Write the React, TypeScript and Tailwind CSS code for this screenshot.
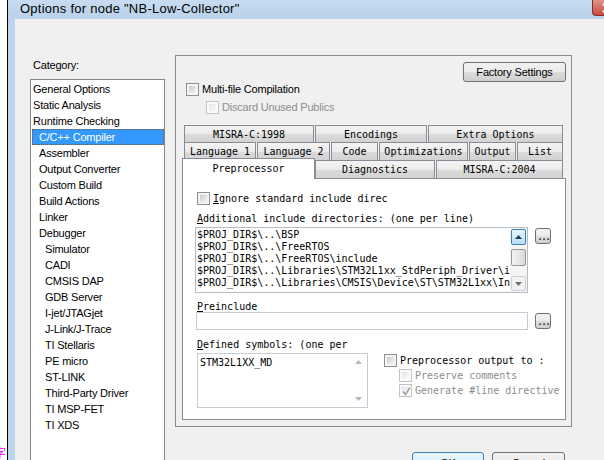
import React from "react";

const sans = "font-['Liberation_Sans',Arial,sans-serif] text-[11px] tracking-[-0.2px]";
const mono = "font-['DejaVu_Sans_Mono',monospace] text-[10px]";
const winBtn =
  "rounded-[3px] border border-[#707070] bg-[linear-gradient(#f2f2f2_0%,#ebebeb_50%,#dddddd_50%,#cfcfcf_100%)]";
const tabBg =
  "border border-b-0 border-[#898c95] bg-[linear-gradient(#f3f3f3_0%,#ebebeb_50%,#dcdcdc_50%,#d2d2d2_100%)]";

const categories: [string, number][] = [
  ["General Options", 0],
  ["Static Analysis", 0],
  ["Runtime Checking", 0],
  ["C/C++ Compiler", 1],
  ["Assembler", 1],
  ["Output Converter", 1],
  ["Custom Build", 1],
  ["Build Actions", 1],
  ["Linker", 1],
  ["Debugger", 1],
  ["Simulator", 2],
  ["CADI", 2],
  ["CMSIS DAP", 2],
  ["GDB Server", 2],
  ["I-jet/JTAGjet", 2],
  ["J-Link/J-Trace", 2],
  ["TI Stellaris", 2],
  ["PE micro", 2],
  ["ST-LINK", 2],
  ["Third-Party Driver", 2],
  ["TI MSP-FET", 2],
  ["TI XDS", 2],
];
const levelPad = ["pl-0", "pl-[6px]", "pl-[12px]"];

const includeDirs = [
  "$PROJ_DIR$\\..\\BSP",
  "$PROJ_DIR$\\..\\FreeRTOS",
  "$PROJ_DIR$\\..\\FreeRTOS\\include",
  "$PROJ_DIR$\\..\\Libraries\\STM32L1xx_StdPeriph_Driver\\inc",
  "$PROJ_DIR$\\..\\Libraries\\CMSIS\\Device\\ST\\STM32L1xx\\Include",
];

const row1 = [
  { label: "MISRA-C:1998", w: "w-[130px]" },
  { label: "Encodings", w: "w-[112px]" },
  { label: "Extra Options", w: "w-[135px]" },
];
const row2 = [
  { label: "Language 1", w: "w-[72px]" },
  { label: "Language 2", w: "w-[73px]" },
  { label: "Code", w: "w-[47px]" },
  { label: "Optimizations", w: "w-[89px]" },
  { label: "Output", w: "w-[47px]" },
  { label: "List", w: "w-[46px]" },
];

function Check({ disabled = false, checked = false }: { disabled?: boolean; checked?: boolean }) {
  return (
    <span
      className={`flex h-[13px] w-[13px] shrink-0 p-[2px] border ${
        disabled ? "border-[#c4c4c4] bg-[#fafafa]" : "border-[#8e8f8f] bg-[#f4f4f4]"
      }`}
    >
      <span
        className={`relative flex-1 ${
          disabled
            ? "bg-[linear-gradient(135deg,#e6e6e6,#f8f8f8)]"
            : "bg-[linear-gradient(135deg,#c7cbd1,#f4f4f4)]"
        }`}
      >
        {checked && (
          <svg className="absolute left-[-1px] top-[-1px]" width="11" height="11" viewBox="0 0 11 11">
            <polyline points="2,5.5 4.5,8.5 9,1.5" fill="none" stroke="#9a9a9a" strokeWidth="1.4" />
          </svg>
        )}
      </span>
    </span>
  );
}

function Arrow({ up, color }: { up: boolean; color: string }) {
  return (
    <svg width="7" height="4" viewBox="0 0 7 4">
      <polygon points={up ? "0,4 3.5,0 7,4" : "0,0 3.5,4 7,0"} fill={color} />
    </svg>
  );
}

function Browse() {
  return (
    <div className={`flex h-[16px] w-[16px] shrink-0 items-end justify-center pb-[1px] ${winBtn}`}>
      <span className={`${mono} leading-none tracking-[-2px]`}>...</span>
    </div>
  );
}

function Tab({ label, w }: { label: string; w: string }) {
  return (
    <div className={`flex h-full items-center justify-center ${w} ${tabBg} ${mono} text-black`}>{label}</div>
  );
}

export default function App() {
  return (
    <div className="flex h-[460px] w-[604px] overflow-hidden bg-white">
      <div className="flex w-[7px] shrink-0 flex-col justify-end overflow-hidden">
        <span className="ml-[-6px] mb-[1px] font-['Noto_Sans_CJK_SC',sans-serif] text-[12px] leading-none text-[#ff00ff]">
          字
        </span>
      </div>
      <div className="w-px shrink-0 bg-black" />

      <div className="flex min-w-0 flex-1 flex-col">
        {/* title bar */}
        <div className="flex h-[19px] shrink-0 items-start bg-[linear-gradient(#c7dcf2,#b9d1ea)]">
          <span className="min-w-0 flex-1 pl-[12px] pt-[1px] font-['Liberation_Sans',Arial,sans-serif] text-[13px] leading-[15px] tracking-[0.25px] text-black">
            Options for node "NB-Low-Collector"
          </span>
          <div className="mr-[-31px] flex h-[16px] w-[43px] shrink-0 items-center rounded-bl-[4px] border border-t-0 border-[#8a3028] bg-[linear-gradient(#e3958b,#c64a3d)] pl-[9px]">
            <svg width="12" height="10" viewBox="0 0 12 10">
              <path d="M1 1 L11 9 M11 1 L1 9" stroke="#fff" strokeWidth="2.2" />
            </svg>
          </div>
        </div>

        <div className="flex min-h-0 flex-1">
          <div className="w-[7px] shrink-0 bg-[#bcd3ec]" />

          {/* dialog body */}
          <div className="flex min-w-0 flex-1 items-start bg-[#f0f0f0] pl-[15px] pt-[36px]">
            {/* category column */}
            <div className="flex w-[135px] shrink-0 flex-col">
              <span className={`${sans} mt-[3px] h-[14px] pl-[3px] leading-[14px] text-black`}>Category:</span>
              <div className="mt-[7px] h-[400px] border border-[#828790] bg-white pt-[1px]">
                {categories.map(([label, level]) => {
                  const selected = label === "C/C++ Compiler";
                  return (
                    <div
                      key={label}
                      className={`ml-px h-[16px] whitespace-nowrap border leading-[14px] ${sans} ${levelPad[level]} ${
                        selected
                          ? "border-dotted border-[#7a5a30] bg-[#3399ff] text-white"
                          : "border-transparent text-black"
                      }`}
                    >
                      {label}
                    </div>
                  );
                })}
              </div>
            </div>

            {/* options column */}
            <div className="ml-[10px] flex w-[397px] shrink-0 flex-col">
              <div className="flex h-[372px] flex-col border border-[#8c8c8c]">
                <div className="flex justify-end pr-[5px] pt-[6px]">
                  <div className={`flex h-[20px] w-[103px] items-center justify-center ${winBtn} ${sans} text-black`}>
                    Factory Settings
                  </div>
                </div>
                <div className="ml-[10px] mt-[1px] flex h-[13px] items-center gap-[3px]">
                  <Check />
                  <span className={`${sans} text-black`}>Multi-file Compilation</span>
                </div>
                <div className="ml-[30px] mt-[5px] flex h-[13px] items-center gap-[3px]">
                  <Check disabled />
                  <span className={`${sans} text-[#8d8d8d]`}>Discard Unused Publics</span>
                </div>

                {/* tab rows */}
                <div className="ml-[8px] mt-[11px] flex h-[17px] gap-px">
                  {row1.map((t) => (
                    <Tab key={t.label} {...t} />
                  ))}
                </div>
                <div className="ml-[8px] flex h-[18px] gap-px">
                  {row2.map((t) => (
                    <Tab key={t.label} {...t} />
                  ))}
                </div>
                <div className="ml-[6px] flex h-[18px] items-end">
                  <div
                    className={`relative z-10 mb-[-1px] flex h-[21px] w-[133px] items-center justify-center border border-b-0 border-[#898c95] bg-white pb-[1px] ${mono} text-black`}
                  >
                    Preprocessor
                  </div>
                  <div className="h-full">
                    <Tab label="Diagnostics" w="w-[120px]" />
                  </div>
                  <div className="ml-px h-full">
                    <Tab label="MISRA-C:2004" w="w-[127px]" />
                  </div>
                </div>

                {/* tab page */}
                <div className={`ml-[6px] flex h-[242px] w-[384px] flex-col border border-[#898c95] bg-white ${mono} text-black`}>
                  <div className="ml-[14px] mt-[13px] flex h-[13px] items-center gap-[3px]">
                    <Check />
                    <span className="whitespace-nowrap">
                      <u>I</u>gnore standard include direc
                    </span>
                  </div>
                  <div className="ml-[14px] mt-[8px] h-[12px] leading-[12px] whitespace-nowrap">
                    <u>A</u>dditional include directories: (one per line)
                  </div>

                  <div className="mt-[2px] flex items-start">
                    <div className="ml-[12px] flex h-[66px] w-[333px] border border-[#b4bcc8] bg-white">
                      <div className="min-w-0 flex-1 overflow-hidden pl-[1px] pt-[1px]">
                        {includeDirs.map((d) => (
                          <div key={d} className="h-[12px] whitespace-pre leading-[12px]">
                            {d}
                          </div>
                        ))}
                      </div>
                      <div className="flex w-[17px] shrink-0 flex-col bg-[#f4f4f4] pb-[1px] pl-px pr-px pt-[1px]">
                        <div className="flex h-[16px] items-center justify-center rounded-[2px] border border-[#3c7fb1] bg-[linear-gradient(#e6f5fd,#b4def6)]">
                          <Arrow up color="#1f3a57" />
                        </div>
                        <div className="mt-[4px] h-[17px] rounded-[2px] border border-[#979797] bg-[linear-gradient(90deg,#f4f4f4,#d9d9d9)]" />
                        <div className="flex-1" />
                        <div className="flex h-[15px] items-center justify-center rounded-[2px] border border-[#d0d0d0] bg-[#f2f2f2]">
                          <Arrow up={false} color="#707070" />
                        </div>
                      </div>
                    </div>
                    <div className="ml-[7px] mt-[1px]">
                      <Browse />
                    </div>
                  </div>

                  <div className="ml-[14px] mt-[8px] h-[11px] leading-[11px] whitespace-nowrap">
                    <u>P</u>reinclude
                  </div>
                  <div className="flex items-start">
                    <div className="ml-[13px] h-[18px] w-[332px] border border-[#c5ccd6] bg-white" />
                    <div className="ml-[7px] mt-[1px]">
                      <Browse />
                    </div>
                  </div>

                  <div className="ml-[14px] mt-[9px] h-[12px] leading-[12px] whitespace-nowrap">
                    <u>D</u>efined symbols: (one per
                  </div>
                  <div className="mt-[2px] flex items-start">
                    <div className="ml-[14px] flex h-[55px] w-[171px] border border-[#c5ccd6] bg-white">
                      <div className="min-w-0 flex-1 pl-[2px] pt-[3px] leading-[12px]">STM32L1XX_MD</div>
                      <div className="flex w-[17px] shrink-0 flex-col items-center justify-between py-[6px]">
                        <Arrow up color="#b8b8b8" />
                        <Arrow up={false} color="#b8b8b8" />
                      </div>
                    </div>
                    <div className="ml-[16px] mt-[1px] flex flex-col gap-[2px]">
                      <div className="flex h-[13px] items-center gap-[3px] whitespace-nowrap">
                        <Check />
                        <span>Preprocessor output to :</span>
                      </div>
                      <div className="ml-[15px] flex h-[13px] items-center gap-[3px] whitespace-nowrap text-[#8d8d8d]">
                        <Check disabled />
                        <span>Preserve comments</span>
                      </div>
                      <div className="ml-[15px] flex h-[13px] items-center gap-[3px] whitespace-nowrap text-[#8d8d8d]">
                        <Check disabled checked />
                        <span>Generate #line directive</span>
                      </div>
                    </div>
                  </div>
                </div>
              </div>

              {/* dialog buttons */}
              <div className="mr-[7px] mt-[25px] flex justify-end gap-[8px]">
                <div className="flex h-[23px] w-[72px] items-center justify-center rounded-[3px] border border-[#3c7fb1] bg-[linear-gradient(#eaf6fd_0%,#d9f0fc_50%,#bee6fd_50%,#a7d9f5_100%)]">
                  <span className={`${sans} text-black`}>OK</span>
                </div>
                <div className={`flex h-[23px] w-[73px] items-center justify-center ${winBtn}`}>
                  <span className={`${sans} text-black`}>Cancel</span>
                </div>
              </div>
            </div>
          </div>
        </div>
      </div>
    </div>
  );
}
